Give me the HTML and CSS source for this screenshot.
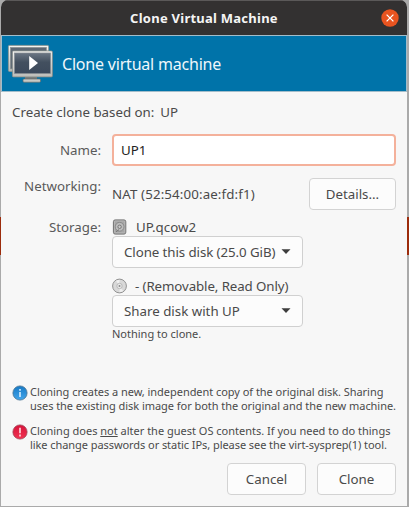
FILE: index.html
```html
<!DOCTYPE html>
<html lang="en">
<head>
<meta charset="utf-8">
<title>Clone Virtual Machine</title>
<link rel="stylesheet" href="styles.css">
</head>
<body>
<div class="desktop">
<main class="window">
  <header class="titlebar">
    <span></span>
    <h1 class="title">Clone Virtual Machine</h1>
    <button class="close" aria-label="Close"><svg width="18" height="18" viewBox="0 0 18 18"><circle cx="9" cy="9" r="8.7" fill="#e95420"/><path d="M5.6 5.6l6.8 6.8M12.4 5.6l-6.8 6.8" stroke="#fff" stroke-width="1.3"/></svg></button>
  </header>
  <section class="banner">
    <svg width="46" height="40" viewBox="0 0 46 40">
      <defs>
        <linearGradient id="screen" x1="0" y1="0" x2="0" y2="1"><stop offset="0" stop-color="#6b7684"/><stop offset=".45" stop-color="#43505f"/><stop offset="1" stop-color="#3c495b"/></linearGradient>
        <linearGradient id="bezel" x1="0" y1="0" x2="0" y2="1"><stop offset="0" stop-color="#f4f4f2"/><stop offset="1" stop-color="#bcbcb8"/></linearGradient>
      </defs>
      <rect x="1.4" y="1.4" width="40.2" height="26" rx="1" fill="url(#bezel)" stroke="#92958f" stroke-width=".8"/>
      <rect x="3.4" y="3.4" width="36" height="21.5" fill="#5c6875" stroke="#8b9190" stroke-width=".6"/>
      <path d="M18 33h12v3H18z" fill="#777a79"/>
      <rect x="16" y="35" width="17.5" height="3.2" rx="1" fill="#c9cac6" stroke="#666a69" stroke-width=".7"/>
      <rect x="5.4" y="6.9" width="40" height="26" rx="1" fill="url(#bezel)" stroke="#858a88" stroke-width=".8"/>
      <rect x="7.5" y="9" width="36" height="20.5" fill="url(#screen)" stroke="#858b90" stroke-width=".7"/>
      <path d="M22.2 11.9l8.8 7-8.8 7z" fill="#fff"/>
    </svg>
    <h2 class="heading">Clone virtual machine</h2>
  </section>
  <section class="content">
    <p class="source"><span>Create clone based on:</span><span class="vm">UP</span></p>
    <div class="row name-row"><label class="label name-label">Name:</label><div class="entry">UP1</div></div>
    <div class="row net-row"><span class="label net-label">Networking:</span><span class="nat">NAT (52:54:00:ae:fd:f1)</span><button class="btn details"><span>Details...</span></button></div>
    <div class="row storage-row">
      <span class="label storage-label">Storage:</span>
      <div class="disks">
        <div class="disk"><svg width="15" height="16" viewBox="0 0 15 16"><rect x="1.4" y=".9" width="12.4" height="14.2" rx="1.8" fill="#a5a5a5" stroke="#737373"/><rect x="2.5" y="2" width="10.2" height="11.8" rx="1" fill="none" stroke="#bcbcbc" stroke-width=".7"/><circle cx="7.6" cy="7.8" r="4.4" fill="#bdbdbd" stroke="#858585" stroke-width=".9"/><circle cx="7.6" cy="7.8" r="1.7" fill="#c9c9c9" stroke="#707070" stroke-width=".9"/><path d="M4 12.8l3-2.2" stroke="#777"/></svg><span class="qcow">UP.qcow2</span></div>
        <div class="combo"><span class="clone-disk">Clone this disk (25.0 GiB)</span><svg width="10" height="5" viewBox="0 0 10 5"><path d="M.5.2h9L5 5z" fill="#3d3d3d"/></svg></div>
        <div class="disk second"><svg width="15" height="16" viewBox="0 0 15 16"><circle cx="7.5" cy="8" r="6.9" fill="#d8d8d8" stroke="#929292"/><path d="M7.5 8L4 2.8A6 6 0 0 1 7.5 2zM7.5 8l3.7 5A6 6 0 0 1 7.5 14z" fill="#efefef"/><circle cx="7.5" cy="8" r="2.7" fill="#e9e9e9" stroke="#a8a8a8" stroke-width=".7"/><circle cx="7.5" cy="8" r="1" fill="#888"/></svg><span class="removable">- (Removable, Read Only)</span></div>
        <div class="combo"><span class="share">Share disk with UP</span><svg width="10" height="5" viewBox="0 0 10 5"><path d="M.5.2h9L5 5z" fill="#3d3d3d"/></svg></div>
        <p class="nothing"><span>Nothing to clone.</span></p>
      </div>
    </div>
    <div class="note info">
      <svg width="16" height="16" viewBox="0 0 16 16"><defs><linearGradient id="blue" x1="0" y1="0" x2="0" y2="1"><stop offset="0" stop-color="#1679c5"/><stop offset="1" stop-color="#43a6eb"/></linearGradient></defs><circle cx="8" cy="8" r="7.1" fill="url(#blue)" stroke="#4a7492" stroke-width=".8"/><path d="M8 4v1.7M8 7v5" stroke="#d9efff" stroke-width="1.6"/></svg>
      <p><span class="n1">Cloning creates a new, independent copy of the original disk. Sharing</span><br><span class="n2">uses the existing disk image for both the original and the new machine.</span></p>
    </div>
    <div class="note warn">
      <svg width="16" height="16" viewBox="0 0 16 16"><defs><linearGradient id="red" x1="0" y1="0" x2="0" y2="1"><stop offset="0" stop-color="#d6133a"/><stop offset="1" stop-color="#f23352"/></linearGradient></defs><circle cx="8" cy="8" r="7.1" fill="url(#red)" stroke="#9e4456" stroke-width=".8"/><path d="M8 3.8v5.4M8 10.6v1.8" stroke="#ffe0e5" stroke-width="1.6"/></svg>
      <p><span class="n3">Cloning does <u>not</u> alter the guest OS contents. If you need to do things</span><br><span class="n4">like change passwords or static IPs, please see the virt-sysprep(1) tool.</span></p>
    </div>
    <footer class="actions"><button class="btn action"><span class="cancel">Cancel</span></button><button class="btn action"><span class="clone">Clone</span></button></footer>
  </section>
</main>
</div>
</body>
</html>
```
FILE: styles.css
```css
* { box-sizing: border-box; margin: 0; padding: 0; }
body { width: 409px; height: 507px; overflow: hidden; background: #999; font: 13.3px/20px "Noto Sans", sans-serif; color: #4a4a4a; }
.desktop { height: 507px; padding: 0 2px 1px 1px; background: linear-gradient(#aaa 217px, #9c2c0c 217px 255px, #aaa 255px); }
.window { height: 506px; background: #f7f7f7; border-radius: 7px 7px 0 0; overflow: hidden; }
span { white-space: nowrap; }
svg { display: block; flex: none; }
.titlebar { height: 35px; display: grid; grid-template-columns: 26px 1fr 26px; align-items: center; background: #333131; border-top: 1px solid #5b5959; color: #f5f5f5; }
.title { font-size: 13px; line-height: 20px; font-weight: 700; text-align: center; letter-spacing: .25px; white-space: nowrap; }
.close { border: 0; background: none; }
.banner { height: 57px; display: flex; align-items: center; gap: 9px; padding: 0 0 0 5px; background: #0073a9; border: 1px solid #a3bdca; color: #eef7fb; }
.heading { font-size: 16px; line-height: 24px; font-weight: 400; letter-spacing: -.2px; }
.content { padding: 10px 11px 0; }
.source { height: 20px; display: flex; gap: 6px; }
.row { display: grid; grid-template-columns: 89px 1fr; column-gap: 11px; }
.label { text-align: right; color: #5a5a5a; }
.name-row { margin-top: 12px; height: 32px; align-items: center; }
.entry { height: 32px; border: 2px solid #f4b19b; border-radius: 4px; background: #fff; padding: 4px 7px; color: #222; }
.net-row { margin-top: 12px; height: 32px; grid-template-columns: 89px 1fr 87px; align-items: center; }
.net-label { align-self: start; margin-top: -2px; }
.nat { letter-spacing: .13px; }
.btn { border: 1.5px solid #d3d3d3; border-radius: 4px; background: #fcfcfc; font: inherit; color: #4a4a4a; }
.details { height: 32px; }
.storage-row { margin-top: 7px; }
.disk { height: 19px; display: flex; align-items: center; gap: 9px; }
.second { margin-top: 8px; }
.second span { margin-left: -1px; letter-spacing: -.1px; }
.combo { width: 191px; height: 32px; display: flex; align-items: center; justify-content: space-between; padding: 0 11px 1px; border: 1.5px solid #d0d0d0; border-radius: 4px; background: #fcfcfc; }
.clone-disk { letter-spacing: -.08px; }
.nothing { margin-top: -1px; font-size: 11px; line-height: 15px; }
.note { display: flex; gap: 2px; font-size: 11px; line-height: 14px; }
.n1, .n2 { letter-spacing: -.045px; }
.n4 { letter-spacing: -.065px; }
.info { margin-top: 44px; }
.warn { margin-top: 11px; }
.actions { display: flex; justify-content: flex-end; gap: 11px; margin-top: 11px; }
.action { width: 79px; height: 32px; }
```
